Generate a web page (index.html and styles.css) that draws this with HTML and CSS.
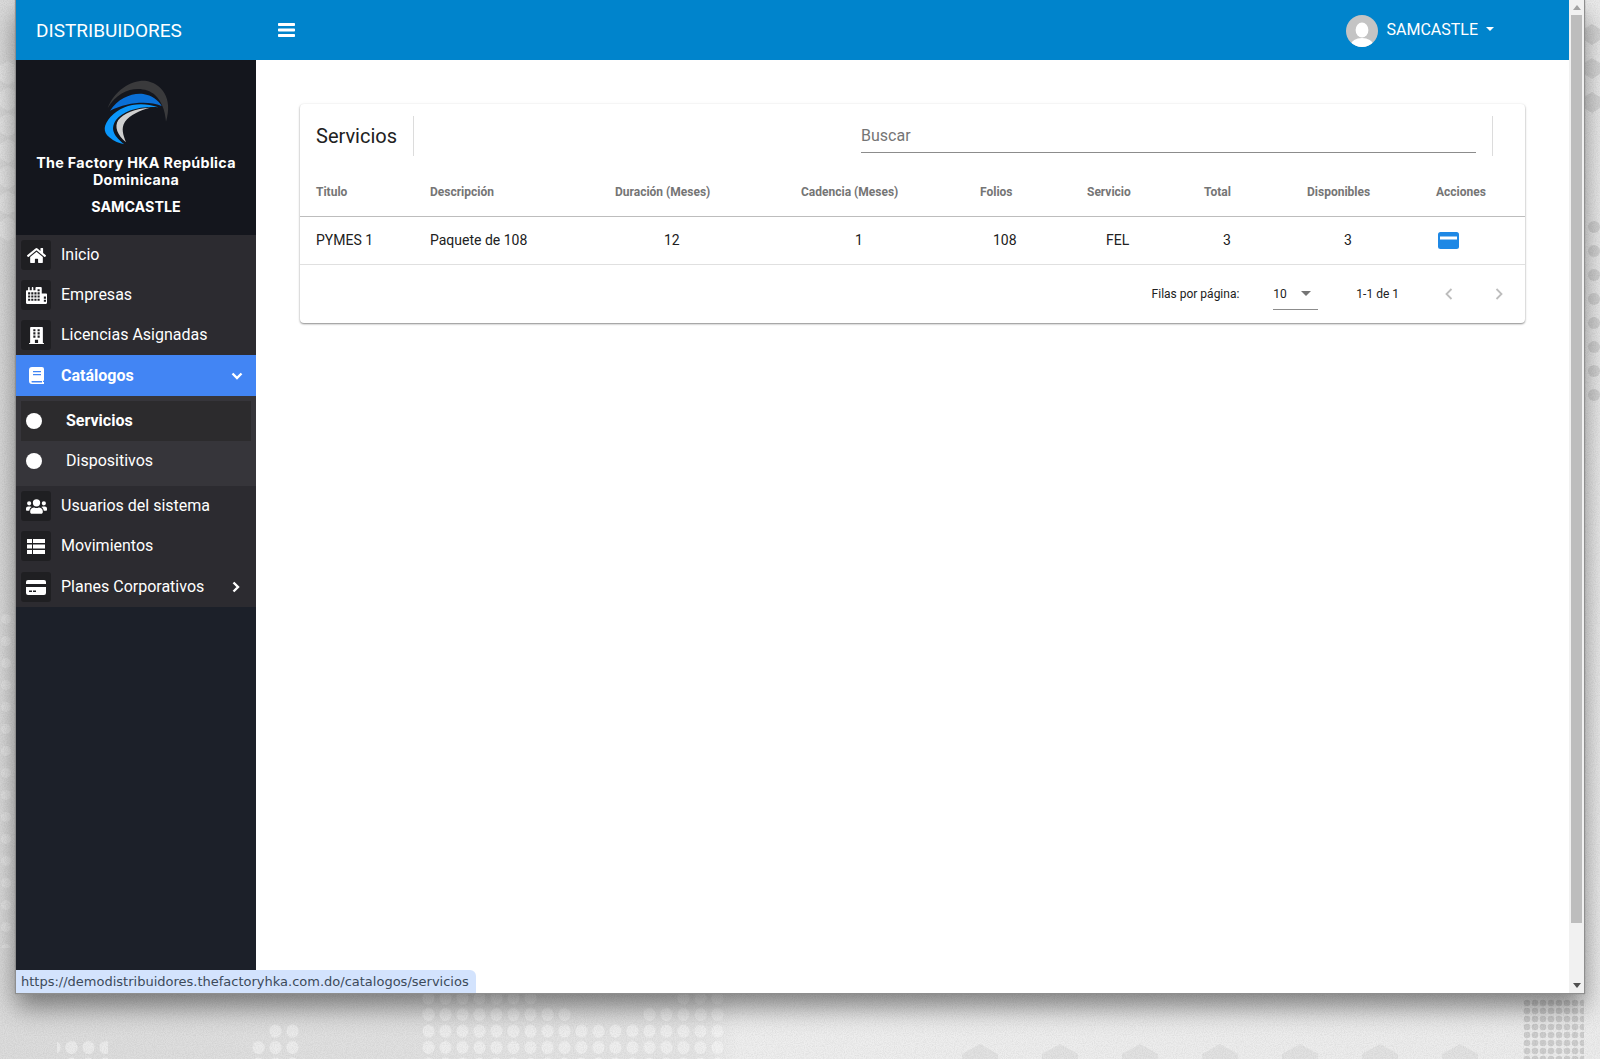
FILE: index.html
```html
<!DOCTYPE html>
<html lang="es">
<head>
<meta charset="utf-8">
<title>Distribuidores</title>
<link rel="stylesheet" href="styles.css">
</head>
<body>
<svg class="desktop-pattern" width="1600" height="1059" aria-hidden="true">
  <defs>
    <pattern id="dots" x="1523" y="999" width="8" height="8" patternUnits="userSpaceOnUse">
      <circle cx="4" cy="4" r="3.300" fill="#cdcdcd"/>
    </pattern>
    <pattern id="dots2" x="420" y="990" width="17" height="16.500" patternUnits="userSpaceOnUse">
      <ellipse cx="8.500" cy="8" rx="6" ry="6.500" fill="#fff" fill-opacity=".42"/>
    </pattern>
    <pattern id="hexlight" x="0" y="60" width="24" height="26" patternUnits="userSpaceOnUse">
      <polygon points="8,1 18,7 18,19 8,25 -2,19 -2,7" fill="#e6e6e6"/>
    </pattern>
    <pattern id="hexsmall" x="0" y="608" width="16" height="22" patternUnits="userSpaceOnUse">
      <circle cx="6" cy="11" r="5" fill="#e6e6e6"/>
    </pattern>
    <pattern id="hexdark" x="1584" y="20" width="16" height="34" patternUnits="userSpaceOnUse">
      <polygon points="8,4 16,9 16,20 8,25 0,20 0,9" fill="#d8d8d8"/>
    </pattern>
    <pattern id="hexdark2" x="1584" y="215" width="16" height="24" patternUnits="userSpaceOnUse">
      <circle cx="10" cy="12" r="6" fill="#d4d4d4"/>
    </pattern>
    <pattern id="hexbottom" x="1300" y="1040" width="80" height="30" patternUnits="userSpaceOnUse">
      <polygon points="0,4 18,14 18,30 -18,30 -18,14" fill="#e2e2e2"/>
      <polygon points="80,4 98,14 98,30 62,30 62,14" fill="#e2e2e2"/>
    </pattern>
    <filter id="grain" x="0" y="0" width="100%" height="100%">
      <feTurbulence type="fractalNoise" baseFrequency="0.9" numOctaves="2" seed="4"/>
      <feColorMatrix values="0 0 0 0 0  0 0 0 0 0  0 0 0 0 0  0.9 0 0 0 -0.3"/>
    </filter>
  </defs>
  <rect x="0" y="60" width="16" height="182" fill="url(#hexlight)"/>
  <rect x="0" y="608" width="16" height="340" fill="url(#hexsmall)"/>
  <rect x="1584" y="20" width="16" height="102" fill="url(#hexdark)"/>
  <rect x="1584" y="215" width="16" height="190" fill="url(#hexdark2)"/>
  <rect x="960" y="1040" width="540" height="19" fill="url(#hexbottom)"/>
  <rect x="420" y="990" width="119" height="16" fill="url(#dots2)"/>
  <rect x="675" y="990" width="51" height="16" fill="url(#dots2)"/>
  <rect x="420" y="1006" width="153" height="17" fill="url(#dots2)"/>
  <rect x="641" y="1006" width="85" height="17" fill="url(#dots2)"/>
  <rect x="420" y="1023" width="306" height="36" fill="url(#dots2)"/>
  <rect x="57" y="1039" width="51" height="20" fill="url(#dots2)"/>
  <rect x="250" y="1039" width="51" height="20" fill="url(#dots2)"/>
  <rect x="267" y="1023" width="34" height="16" fill="url(#dots2)"/>
  <rect x="1523" y="999" width="61" height="60" fill="url(#dots)"/>
  <rect width="1600" height="1059" filter="url(#grain)" opacity=".12"/>
</svg>
<div class="window">
  <div class="app">
    <header class="topbar">
      <div class="brand">DISTRIBUIDORES</div>
      <svg class="burger" viewBox="0 0 17 14" width="17" height="14"><path d="M.8 0h15.400a.8.8 0 0 1 .8.8v1.500a.8.8 0 0 1-.8.8H.8a.8.8 0 0 1-.8-.8V.8A.8.8 0 0 1 .8 0zM.8 5.450h15.400a.8.8 0 0 1 .8.8v1.500a.8.8 0 0 1-.8.8H.8a.8.8 0 0 1-.8-.8v-1.500a.8.8 0 0 1 .8-.8zM.8 10.900h15.400a.8.8 0 0 1 .8.8v1.500a.8.8 0 0 1-.8.8H.8a.8.8 0 0 1-.8-.8v-1.500a.8.8 0 0 1 .8-.8z" fill="#fff"/></svg>
      <div class="user">
        <svg class="avatar" viewBox="0 0 32 32" width="32" height="32">
          <circle cx="16" cy="16" r="16" fill="#c4c4c4"/>
          <clipPath id="av"><circle cx="16" cy="16" r="16"/></clipPath>
          <g clip-path="url(#av)" fill="#fff"><ellipse cx="16" cy="15" rx="6.400" ry="7.600"/><ellipse cx="16" cy="29.500" rx="11" ry="6.500"/></g>
        </svg>
        <span class="user-name">SAMCASTLE</span>
        <span class="caret"></span>
      </div>
    </header>
    <div class="body-row">
      <aside class="sidebar">
        <div class="profile">
          <svg class="logo" viewBox="0 0 270 240" width="90" height="80">
            <path d="M53 115C72 60 125 30 165 32C215 38 250 85 228 155C225 120 215 95 195 75C160 45 90 50 53 115Z" fill="#3a3a3c"/>
            <path d="M60 122C85 85 125 68 160 72C185 76 205 90 215 108C175 92 115 95 60 122Z" fill="#0a6fd6"/>
            <path d="M205 112C150 92 95 105 62 140C40 165 38 185 58 202C72 214 88 220 103 223C75 200 58 180 78 150C100 122 150 108 205 112Z" fill="#0a96fa"/>
            <path d="M180 113C135 115 100 130 85 150C72 170 82 195 108 217C100 195 92 175 105 155C120 135 150 120 180 113Z" fill="#cfcfcf"/>
          </svg>
          <div class="company">The Factory HKA República Dominicana</div>
          <div class="profile-user">SAMCASTLE</div>
        </div>
        <nav class="menu">
          <a class="item">
            <span class="ico"><svg viewBox="0 0 576 512" width="19" height="17"><path fill="#fff" d="M280.37 148.26L96 300.11V464a16 16 0 0 0 16 16l112.06-.29a16 16 0 0 0 15.92-16V368a16 16 0 0 1 16-16h64a16 16 0 0 1 16 16v95.64a16 16 0 0 0 16 16.05L464 480a16 16 0 0 0 16-16V300L295.67 148.26a12.19 12.19 0 0 0-15.3 0zM571.6 251.47L488 182.56V44.05a12 12 0 0 0-12-12h-56a12 12 0 0 0-12 12v72.61L318.47 43a48 48 0 0 0-61 0L4.34 251.47a12 12 0 0 0-1.6 16.9l25.5 31A12 12 0 0 0 45.15 301l235.22-193.74a12.19 12.19 0 0 1 15.3 0L530.9 301a12 12 0 0 0 16.9-1.6l25.5-31a12 12 0 0 0-1.7-16.93z"/></svg></span>
            <span class="label">Inicio</span>
          </a>
          <a class="item">
            <span class="ico"><svg viewBox="0 0 640 512" width="21" height="17"><path fill="#fff" fill-rule="evenodd" d="M616 192H480V24c0-13.260-10.740-24-24-24H312c-13.260 0-24 10.740-24 24v72h-64V16c0-8.840-7.160-16-16-16h-16c-8.840 0-16 7.160-16 16v80h-64V16c0-8.840-7.160-16-16-16H80c-8.840 0-16 7.160-16 16v80H24c-13.260 0-24 10.740-24 24v360c0 17.670 14.330 32 32 32h576c17.670 0 32-14.330 32-32V216c0-13.260-10.740-24-24-24zM64 160h64v64H64zm0 96h64v64H64zm0 96h64v64H64zm96-192h64v64h-64zm0 96h64v64h-64zm0 96h64v64h-64zm96-192h64v64h-64zm0 96h64v64h-64zm0 96h64v64h-64zm96-288h64v64h-64zm0 96h64v64h-64zm0 96h64v64h-64zm0 96h64v64h-64zm192-64h64v64h-64zm0 96h64v64h-64z"/></svg></span>
            <span class="label">Empresas</span>
          </a>
          <a class="item">
            <span class="ico"><svg viewBox="0 0 448 512" width="15" height="17"><path fill="#fff" fill-rule="evenodd" d="M436 480h-20V24c0-13.255-10.745-24-24-24H56C42.745 0 32 10.745 32 24v456H12c-6.627 0-12 5.373-12 12v20h448v-20c0-6.627-5.373-12-12-12zM128 64h64v64h-64zm128 0h64v64h-64zM128 160h64v64h-64zm128 0h64v64h-64zM128 256h64v64h-64zm128 0h64v64h-64zM176 384h96v96h-96z"/></svg></span>
            <span class="label">Licencias Asignadas</span>
          </a>
          <a class="item active">
            <span class="ico ico-plain"><svg viewBox="0 0 15 17" width="15" height="17"><path fill="#fff" fill-rule="evenodd" d="M3 0h10a2 2 0 0 1 2 2v11a1 1 0 0 1-1 1v1h1v2H3a3 3 0 0 1-3-3V3a3 3 0 0 1 3-3zM4 4v1.300h8V4zm0 3v1.300h8V7zM3 14a.8.8 0 0 0 0 1.500h10V14z"/></svg></span>
            <span class="label label-active">Catálogos</span>
            <svg class="chev-down" viewBox="0 0 12 8" width="12" height="8"><path d="M1.500 1.500 6 6l4.500-4.500" fill="none" stroke="#fff" stroke-width="2.400"/></svg>
          </a>
          <div class="submenu">
            <a class="sub current"><span class="dot"></span><span class="sub-label">Servicios</span></a>
            <a class="sub"><span class="dot"></span><span class="sub-label">Dispositivos</span></a>
          </div>
          <a class="item">
            <span class="ico"><svg viewBox="0 0 640 512" width="21" height="17"><path fill="#fff" d="M96 224a64 64 0 1 0 0-128 64 64 0 0 0 0 128zm448 0a64 64 0 1 0 0-128 64 64 0 0 0 0 128zm32 32h-64c-17.600 0-33.500 7.100-45.100 18.600 40.300 22.100 68.900 62 75.100 109.400h66c17.700 0 32-14.300 32-32v-32c0-35.300-28.700-64-64-64zm-256 0a112 112 0 1 0 0-224 112 112 0 0 0 0 224zm76.800 32h-8.300c-20.800 10-43.900 16-68.500 16s-47.600-6-68.500-16h-8.300C179.600 288 128 339.600 128 403.200V432c0 26.500 21.500 48 48 48h288c26.500 0 48-21.500 48-48v-28.800c0-63.600-51.600-115.200-115.200-115.200zm-223.700-13.400C161.500 263.100 145.600 256 128 256H64c-35.300 0-64 28.700-64 64v32c0 17.700 14.300 32 32 32h65.900c6.300-47.400 34.900-87.300 75.200-109.400z"/></svg></span>
            <span class="label">Usuarios del sistema</span>
          </a>
          <a class="item">
            <span class="ico"><svg viewBox="0 0 18 15" width="18" height="15"><path fill="#fff" d="M0 0h5v4H0zM6 0h12v4H6zM0 5.500h5v4H0zM6 5.500h12v4H6zM0 11h5v4H0zM6 11h12v4H6z"/></svg></span>
            <span class="label">Movimientos</span>
          </a>
          <a class="item item-last">
            <span class="ico"><svg viewBox="0 0 20 15" width="20" height="15"><path fill="#fff" fill-rule="evenodd" d="M2 0h16a2 2 0 0 1 2 2v2H0V2a2 2 0 0 1 2-2zM0 7h20v6a2 2 0 0 1-2 2H2a2 2 0 0 1-2-2zm3 3.500v1.500h3v-1.500zm4 0v1.500h3v-1.500z"/></svg></span>
            <span class="label">Planes Corporativos</span>
            <svg class="chev-right" viewBox="0 0 8 12" width="8" height="12"><path d="M1.500 1.500 6 6l-4.500 4.500" fill="none" stroke="#fff" stroke-width="2.400"/></svg>
          </a>
        </nav>
      </aside>
      <main class="content">
        <section class="card">
          <div class="toolbar">
            <h1 class="card-title">Servicios</h1>
            <div class="search">Buscar</div>
          </div>
          <table class="grid">
            <colgroup>
              <col class="c1"><col class="c2"><col class="c3"><col class="c4"><col class="c5"><col class="c6"><col class="c7"><col class="c8"><col class="c9">
            </colgroup>
            <thead>
              <tr>
                <th class="first">Titulo</th><th>Descripción</th><th>Duración (Meses)</th><th>Cadencia (Meses)</th><th>Folios</th><th>Servicio</th><th>Total</th><th>Disponibles</th><th>Acciones</th>
              </tr>
            </thead>
            <tbody>
              <tr>
                <td class="first">PYMES 1</td><td>Paquete de 108</td><td class="p-dur">12</td><td class="p-cad">1</td><td class="p-fol">108</td><td class="p-ser">FEL</td><td class="p-tot">3</td><td class="p-dis">3</td>
                <td><svg class="action" viewBox="0 0 21 17" width="21" height="17"><rect width="21" height="17" rx="2.500" fill="#1e88e5"/><rect x="2" y="4.500" width="17" height="3" fill="#fff"/></svg></td>
              </tr>
            </tbody>
          </table>
          <div class="pager">
            <span class="pager-label">Filas por página:</span>
            <span class="pager-select"><span>10</span><span class="pager-caret"></span></span>
            <span class="pager-range">1-1 de 1</span>
            <svg class="pager-arrow" viewBox="0 0 8 12" width="8" height="12"><path d="M6.500 1 1.500 6l5 5" fill="none" stroke="#bdbdbd" stroke-width="1.800"/></svg>
            <svg class="pager-arrow" viewBox="0 0 8 12" width="8" height="12"><path d="M1.500 1l5 5-5 5" fill="none" stroke="#bdbdbd" stroke-width="1.800"/></svg>
          </div>
        </section>
      </main>
    </div>
  </div>
  <div class="scrollbar">
    <span class="arrow-up"></span>
    <span class="thumb"></span>
    <span class="arrow-down"></span>
  </div>
  <div class="status">https://demodistribuidores.thefactoryhka.com.do/catalogos/servicios</div>
</div>
</body>
</html>
```
FILE: styles.css
```css
* { box-sizing: border-box; }
html, body { margin: 0; height: 100%; }
body {
  width: 1600px;
  height: 1059px;
  overflow: hidden;
  position: relative;
  background: linear-gradient(90deg, #dcdcdc 0, #e4e4e4 700px, #eeeeee 740px, #ececec 100%);
  font-family: Roboto, "Liberation Sans", sans-serif;
  color: #212121;
}
.desktop-pattern { position: absolute; left: 0; top: 0; }
.window {
  position: absolute;
  left: 16px;
  top: 0;
  width: 1568px;
  height: 993px;
  display: flex;
  background: #fff;
  box-shadow: 0 0 1px 1px #8e8e8e, 0 14px 24px 0 rgba(0, 0, 0, .45);
}
.app { flex: 1; min-width: 0; display: flex; flex-direction: column; }
.topbar {
  height: 60px;
  flex: none;
  background: #0084cc;
  color: #fff;
  display: flex;
  align-items: center;
}
.brand { width: 240px; padding-left: 20px; font-size: 19px; }
.burger { margin-left: 22px; }
.user { margin-left: auto; margin-right: 75px; display: flex; align-items: center; }
.avatar { margin: 2px 0 0 1px; }
.user-name { margin-left: 8px; padding-bottom: 2px; font-size: 16px; }
.caret {
  margin-left: 8px;
  margin-top: -2px;
  border-left: 4px solid transparent;
  border-right: 4px solid transparent;
  border-top: 4px solid #fff;
}
.body-row { flex: 1; min-height: 0; display: flex; }
.sidebar { width: 240px; flex: none; background: #1c2029; color: #fff; }
.profile {
  height: 175px;
  background: #14161d;
  display: flex;
  flex-direction: column;
  align-items: center;
  padding-top: 10px;
  text-align: center;
  font-family: Inter, "Open Sans", sans-serif;
  font-weight: 700;
}
.logo { flex: none; margin-right: 3px; }
.company { font-size: 14.300px; line-height: 17px; width: 220px; margin-top: 4px; letter-spacing: .33px; }
.profile-user { font-size: 14.300px; line-height: 17px; margin-top: 10px; }
.menu { background: #2c2b30; }
.item {
  height: 40px;
  display: flex;
  align-items: center;
  padding-left: 5px;
  font-size: 16px;
  color: #fff;
}
.item-last { height: 41px; padding-top: 1px; }
.ico {
  width: 30px;
  height: 30px;
  flex: none;
  background: #1f1f22;
  border-radius: 3px;
  display: flex;
  align-items: center;
  justify-content: center;
}
.ico-plain { background: transparent; }
.label { margin-left: 10px; padding-bottom: 2px; }
.label-active { padding-bottom: 0; }
.active { background: #4285f4; height: 41px; font-weight: 700; }
.chev-down { margin-left: auto; margin-right: 13px; }
.chev-right { margin-left: 28px; }
.submenu { background: #36353a; padding: 5px; }
.sub { height: 40px; display: flex; align-items: center; font-size: 16px; color: #fff; }
.current { background: #2c2b2d; font-weight: 700; }
.dot { width: 16px; height: 16px; border-radius: 50%; background: #fff; margin-left: 5px; flex: none; }
.sub-label { margin-left: 24px; padding-bottom: 2px; }
.content { flex: 1; padding: 44px 44px 0; background: #fff; }
.card {
  background: #fff;
  border-radius: 4px;
  box-shadow: 0 1px 2px rgba(0, 0, 0, .45), 0 0 4px rgba(0, 0, 0, .04);
  height: 219px;
}
.toolbar { height: 64px; display: flex; align-items: center; padding: 0 33px 0 16px; }
.card-title {
  margin: 0;
  width: 98px;
  height: 40px;
  line-height: 40px;
  font-size: 20px;
  font-weight: 400;
  color: #212121;
  border-right: 1px solid #dcdcdc;
}
.search {
  margin: 0 16px 3px 447px;
  flex: 1;
  height: 37px;
  line-height: 40px;
  font-size: 16px;
  color: #757575;
  border-bottom: 1px solid #8c8c8c;
  position: relative;
}
.search::after {
  content: "";
  position: absolute;
  right: -17px;
  top: 0;
  bottom: -4px;
  width: 1px;
  background: #dcdcdc;
}
.grid { width: 1225px; border-collapse: collapse; table-layout: fixed; }
.c1 { width: 130px; } .c2 { width: 185px; } .c3 { width: 186px; } .c4 { width: 179px; }
.c5 { width: 107px; } .c6 { width: 117px; } .c7 { width: 103px; } .c8 { width: 129px; } .c9 { width: 89px; }
th {
  height: 48px;
  padding: 0;
  text-align: left;
  font-size: 12px;
  font-weight: 700;
  color: #757575;
  border-bottom: 1px solid #bdbdbd;
  white-space: nowrap;
}
td {
  height: 48px;
  padding: 0;
  font-size: 14px;
  color: #212121;
  border-bottom: 1px solid #e0e0e0;
}
.first { padding-left: 16px; }
.p-dur { padding-left: 49px; }
.p-cad { padding-left: 54px; }
.p-fol { padding-left: 13px; }
.p-ser { padding-left: 19px; }
.p-tot { padding-left: 19px; }
.p-dis { padding-left: 37px; }
.action { display: block; margin-left: 2px; }
.pager {
  height: 58px;
  display: flex;
  align-items: center;
  justify-content: flex-end;
  font-size: 12px;
  color: #212121;
  padding-right: 22px;
}
.pager-select {
  margin-left: 34px;
  width: 45px;
  height: 32px;
  border-bottom: 1px solid #8c8c8c;
  display: flex;
  align-items: center;
  margin-top: 1px;
}
.pager-caret {
  margin-left: 14px;
  border-left: 5px solid transparent;
  border-right: 5px solid transparent;
  border-top: 5px solid #757575;
}
.pager-range { margin-left: 38px; margin-right: 46px; }
.pager-arrow + .pager-arrow { margin-left: 42px; }
.scrollbar {
  width: 15px;
  flex: none;
  background: #f1f1f1;
  position: relative;
  display: flex;
  flex-direction: column;
  align-items: center;
}
.arrow-up {
  margin-top: 5px;
  border-left: 4px solid transparent;
  border-right: 4px solid transparent;
  border-bottom: 5px solid #a3a3a3;
}
.thumb { width: 11px; height: 908px; margin-top: 5px; background: #bdbdbd; }
.arrow-down {
  margin-top: auto;
  margin-bottom: 5px;
  border-left: 4px solid transparent;
  border-right: 4px solid transparent;
  border-top: 5px solid #505050;
}
.status {
  position: absolute;
  left: 0;
  bottom: 0;
  height: 23px;
  padding: 0 7px 0 5px;
  line-height: 23px;
  font-family: "DejaVu Sans", sans-serif;
  font-size: 13px;
  color: #3c4a5a;
  background: #d3e3fd;
  border-top-right-radius: 6px;
}
```
